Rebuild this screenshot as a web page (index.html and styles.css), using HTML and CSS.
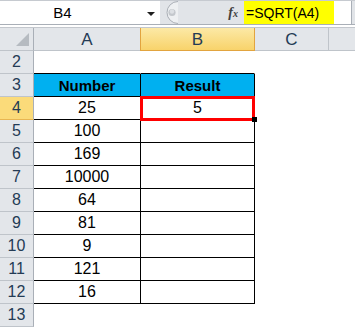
FILE: index.html
```html
<!DOCTYPE html>
<html lang="en">

<head>
	<meta charset="UTF-8">
	<title>SQRT</title>
	<link rel="stylesheet" href="styles.css">
</head>

<body>
	<div class="formula-bar">
		<div class="name-box">
			<span class="name">B4</span>
			<span class="drop"></span>
		</div>
		<div class="bar-mid">
			<svg class="knob" width="20" height="23" viewBox="0 0 20 23">
				<path d="M18 0.5 A11 11 0 0 0 18 22.5" fill="#eef0f2" stroke="#a9aeb5" stroke-width="1" />
				<path d="M19 0 L19 23" stroke="#e1e4e8" stroke-width="2" />
				<circle cx="12" cy="11.5" r="3.6" fill="#c3c7cc" />
				<circle cx="12" cy="10.5" r="2.2" fill="#dde0e4" />
			</svg>
			<span class="fx">f<small>x</small></span>
		</div>
		<div class="formula">
			<span class="mark">=SQRT(A4)</span>
		</div>
	</div>

	<div class="sheet">
		<div class="corner"><span class="tri"></span></div>
		<div class="col-head">A</div>
		<div class="col-head active">B</div>
		<div class="col-head">C</div>
		<div class="col-head last"></div>

		<div class="row-head">2</div>
		<div class="cell top-edge"></div>
		<div class="cell top-edge"></div>
		<div class="cell"></div>
		<div class="cell"></div>

		<div class="row-head">3</div>
		<div class="cell boxed title">Number</div>
		<div class="cell boxed title">Result</div>
		<div class="cell"></div>
		<div class="cell"></div>

		<div class="row-head active">4</div>
		<div class="cell boxed">25</div>
		<div class="cell boxed selected">5</div>
		<div class="cell"></div>
		<div class="cell"></div>

		<div class="row-head">5</div>
		<div class="cell boxed">100</div>
		<div class="cell boxed"></div>
		<div class="cell"></div>
		<div class="cell"></div>

		<div class="row-head">6</div>
		<div class="cell boxed">169</div>
		<div class="cell boxed"></div>
		<div class="cell"></div>
		<div class="cell"></div>

		<div class="row-head">7</div>
		<div class="cell boxed">10000</div>
		<div class="cell boxed"></div>
		<div class="cell"></div>
		<div class="cell"></div>

		<div class="row-head">8</div>
		<div class="cell boxed">64</div>
		<div class="cell boxed"></div>
		<div class="cell"></div>
		<div class="cell"></div>

		<div class="row-head">9</div>
		<div class="cell boxed">81</div>
		<div class="cell boxed"></div>
		<div class="cell"></div>
		<div class="cell"></div>

		<div class="row-head">10</div>
		<div class="cell boxed">9</div>
		<div class="cell boxed"></div>
		<div class="cell"></div>
		<div class="cell"></div>

		<div class="row-head">11</div>
		<div class="cell boxed">121</div>
		<div class="cell boxed"></div>
		<div class="cell"></div>
		<div class="cell"></div>

		<div class="row-head">12</div>
		<div class="cell boxed">16</div>
		<div class="cell boxed"></div>
		<div class="cell"></div>
		<div class="cell"></div>

		<div class="row-head">13</div>
		<div class="cell"></div>
		<div class="cell"></div>
		<div class="cell"></div>
		<div class="cell"></div>
	</div>
</body>

</html>
```

FILE: styles.css
```css
* {
	box-sizing: border-box;
}

body {
	margin: 0;
	font-family: 'Liberation Sans', Arial, sans-serif;
	background-color: #ffffff;
	width: 355px;
	height: 328px;
	overflow: hidden;
}

/* formula bar */

.formula-bar {
	display: flex;
	height: 25px;
	border-top: 1px solid #c6cad0;
	border-bottom: 1px solid #a9afb7;
	background-color: #e1e4e8;
}

.name-box {
	width: 160px;
	background-color: #ffffff;
	display: flex;
	align-items: center;
	position: relative;
	font-size: 15px;
	color: #000000;
}

.name-box .name {
	flex: 1;
	text-align: center;
	padding-right: 22px;
}

.drop {
	width: 0;
	height: 0;
	border-left: 4px solid transparent;
	border-right: 4px solid transparent;
	border-top: 4px solid #1f1f1f;
	margin-right: 5px;
	margin-top: 2px;
}

.bar-mid {
	width: 84px;
	display: flex;
	align-items: center;
}

.knob {
	display: block;
	margin-left: 0;
}

.fx {
	margin-left: auto;
	margin-right: 6px;
	font-family: 'Liberation Serif', 'Times New Roman', serif;
	font-style: italic;
	font-weight: bold;
	font-size: 14px;
	color: #404040;
}

.fx small {
	font-size: 10px;
}

.formula {
	width: 108px;
	background-color: #ffffff;
	border-right: 1px solid #a9afb7;
	display: flex;
	align-items: stretch;
}

.mark {
	width: 90px;
	background-color: #ffff00;
	font-size: 14px;
	color: #000000;
	padding-left: 2px;
	display: flex;
	align-items: center;
}

/* sheet grid */

.sheet {
	margin-top: 2px;
	border-top: 1px solid #c3c7cd;
	display: grid;
	grid-template-columns: 34px 107px 114px 74px 1fr;
	grid-auto-rows: 23px;
}

.corner,
.col-head,
.row-head {
	background-color: #e3e6ea;
	border-right: 1px solid #bfc4ca;
	border-bottom: 1px solid #bfc4ca;
	color: #243b55;
	display: flex;
	align-items: center;
	justify-content: center;
}

.corner {
	position: relative;
	border-right-color: #a9afb7;
}

.tri {
	position: absolute;
	right: 4px;
	bottom: 4px;
	width: 0;
	height: 0;
	border-left: 13px solid transparent;
	border-bottom: 13px solid #b6bbc1;
}

.col-head {
	font-size: 17px;
	padding-top: 2px;
}

.col-head.last {
	border-right: none;
}

.col-head.active {
	background: linear-gradient(#fce9a6, #f8d36b);
	border-left: 1px solid #e2a43f;
	border-right: 1px solid #e2a43f;
	border-bottom-color: #e2a43f;
	margin-left: -1px;
}

.row-head {
	font-size: 16px;
	border-right-color: #a9afb7;
}

.row-head.active {
	background-color: #fbdb7a;
	border-bottom-color: #e8b651;
}

.cell {
	border-right: 1px solid #ffffff;
	border-bottom: 1px solid #ffffff;
	font-size: 16px;
	color: #000000;
	display: flex;
	align-items: center;
	justify-content: center;
}

.cell.top-edge {
	border-bottom-color: #000000;
}

.cell.boxed {
	border-right-color: #000000;
	border-bottom-color: #000000;
}

.cell.title {
	background-color: #00b0f0;
	font-weight: bold;
	font-size: 15px;
}

.cell.selected {
	position: relative;
}

.cell.selected::after {
	content: "";
	position: absolute;
	left: -1px;
	top: -1px;
	right: -1px;
	bottom: -2px;
	border: 3px solid #ff0000;
}

.cell.selected::before {
	content: "";
	position: absolute;
	right: -3px;
	bottom: -3px;
	width: 5px;
	height: 5px;
	background-color: #000000;
	z-index: 1;
}
```
